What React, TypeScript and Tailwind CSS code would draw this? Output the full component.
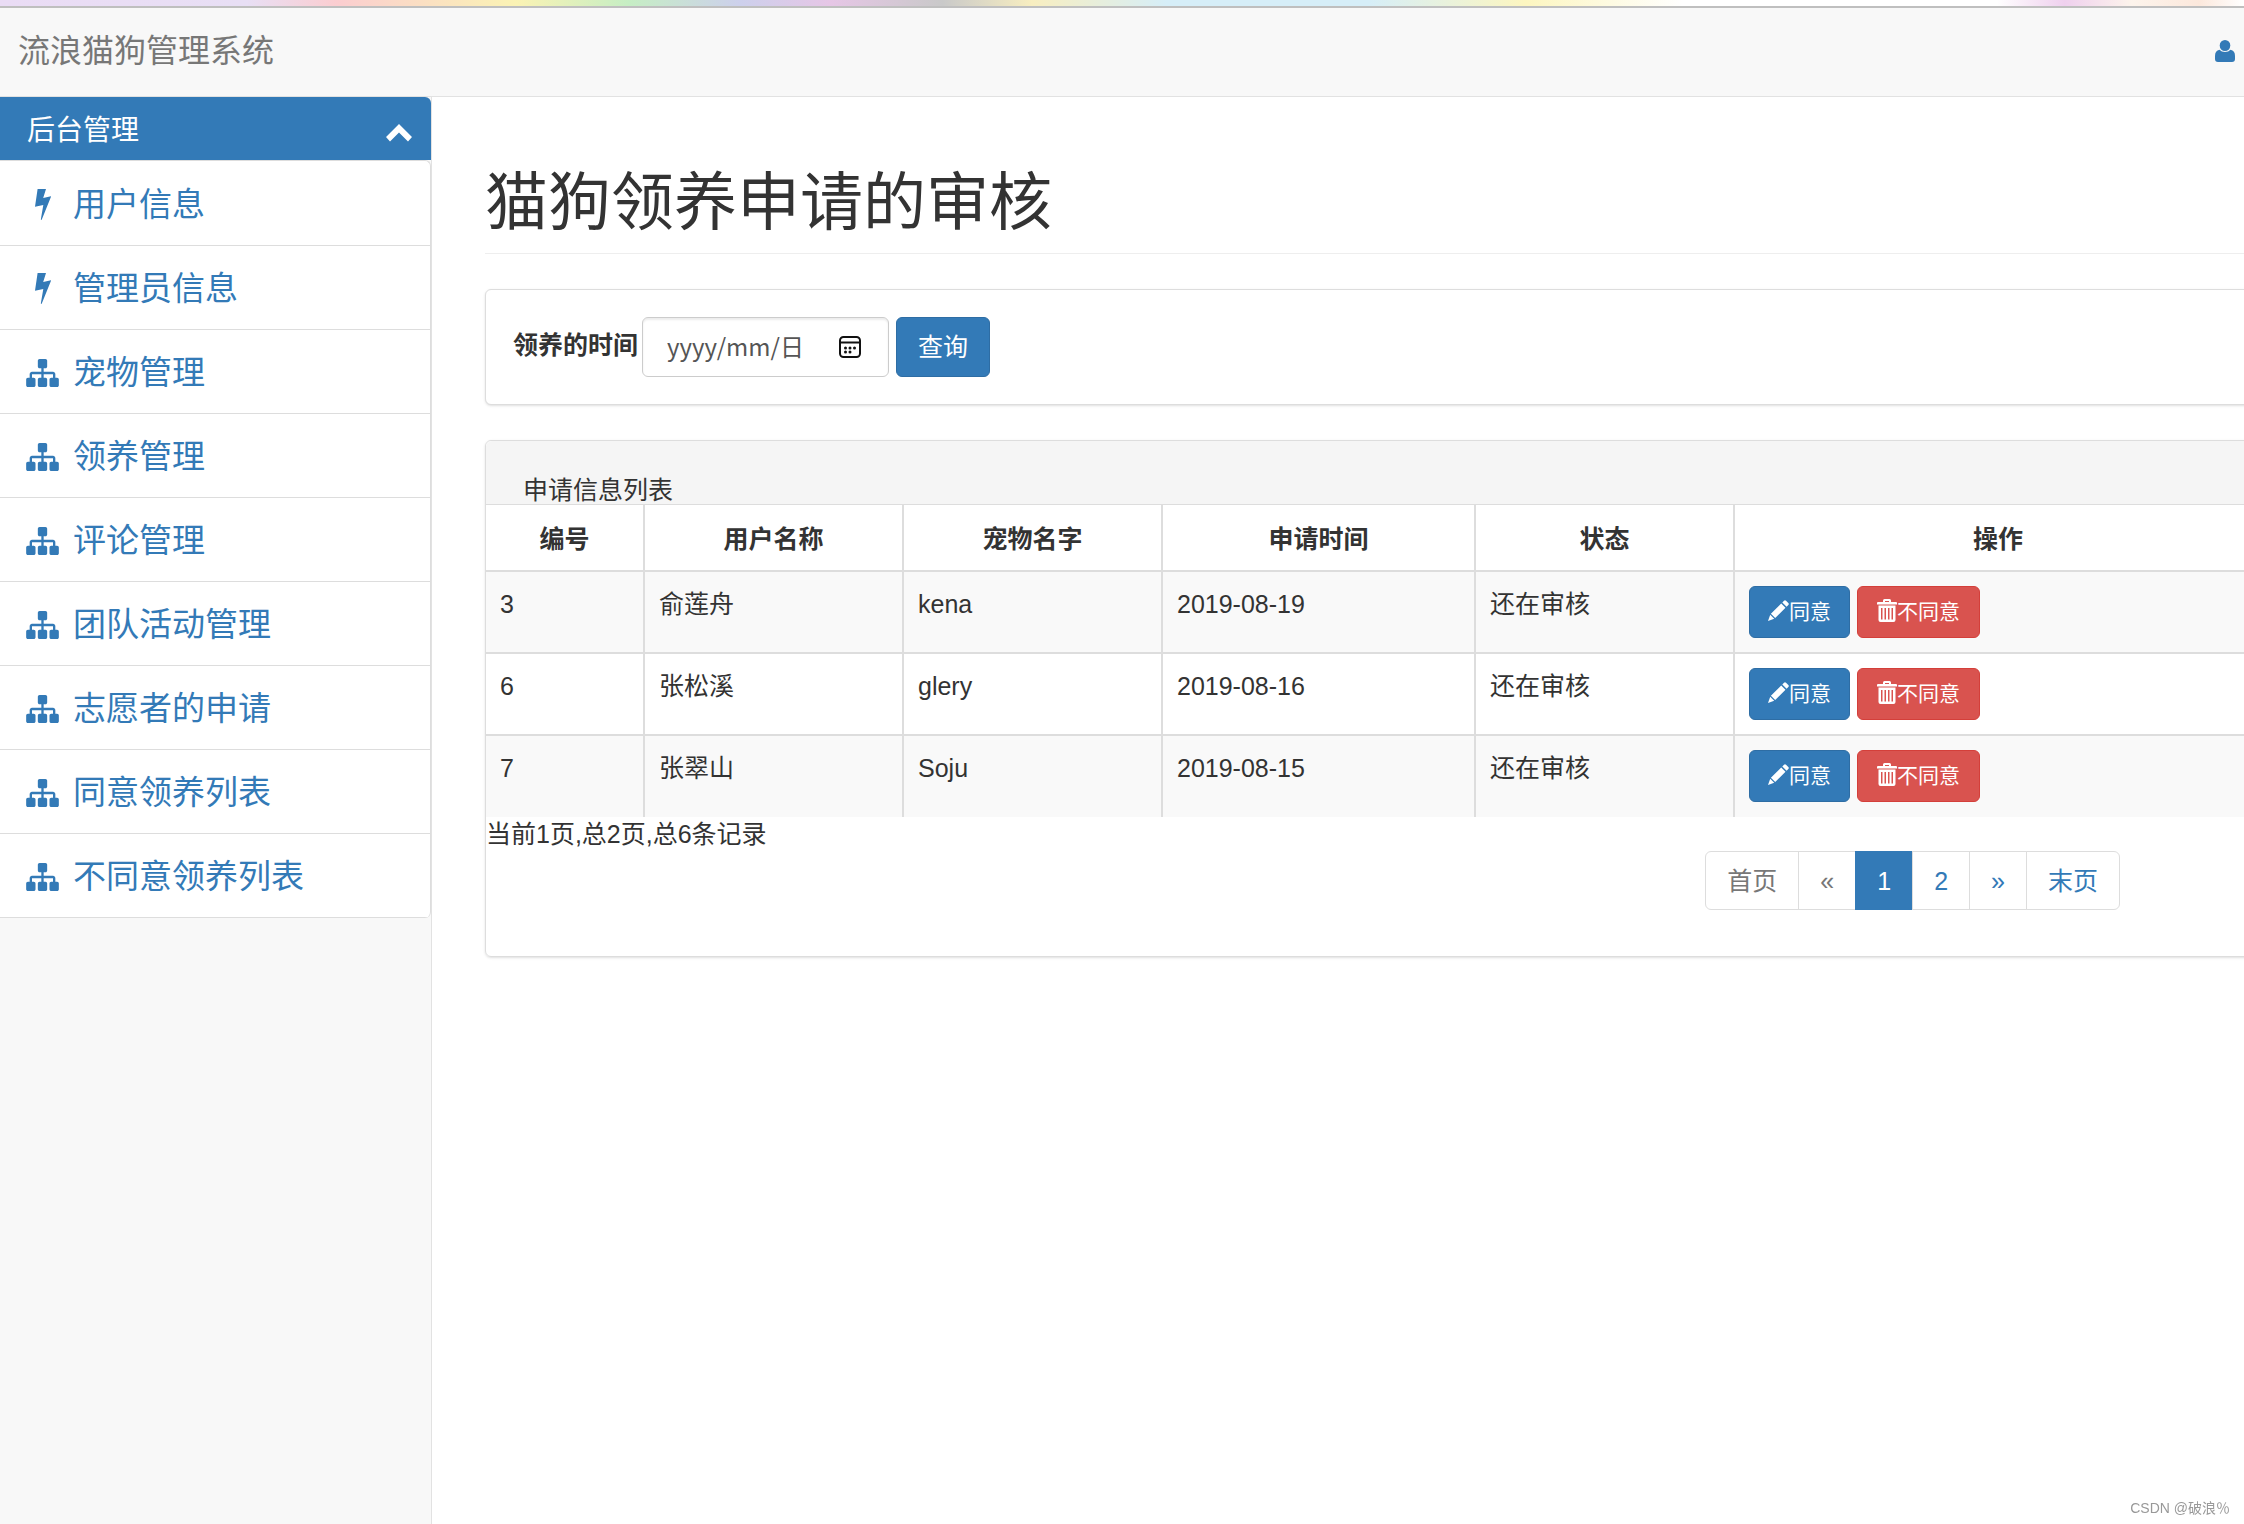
import React from "react";

const menuItems = [
  { label: "用户信息", icon: "bolt" },
  { label: "管理员信息", icon: "bolt" },
  { label: "宠物管理", icon: "sitemap" },
  { label: "领养管理", icon: "sitemap" },
  { label: "评论管理", icon: "sitemap" },
  { label: "团队活动管理", icon: "sitemap" },
  { label: "志愿者的申请", icon: "sitemap" },
  { label: "同意领养列表", icon: "sitemap" },
  { label: "不同意领养列表", icon: "sitemap" },
];

const columns = [
  { title: "编号", width: "w-[158px]" },
  { title: "用户名称", width: "w-[259px]" },
  { title: "宠物名字", width: "w-[259px]" },
  { title: "申请时间", width: "w-[313px]" },
  { title: "状态", width: "w-[259px]" },
  { title: "操作", width: "" },
];

const applications = [
  { id: 3, user: "俞莲舟", pet: "kena", date: "2019-08-19", status: "还在审核" },
  { id: 6, user: "张松溪", pet: "glery", date: "2019-08-16", status: "还在审核" },
  { id: 7, user: "张翠山", pet: "Soju", date: "2019-08-15", status: "还在审核" },
];

const pages = [
  { text: "首页", state: "disabled" },
  { text: "«", state: "disabled" },
  { text: "1", state: "active" },
  { text: "2", state: "" },
  { text: "»", state: "" },
  { text: "末页", state: "" },
];

const BoltIcon = () => (
  <svg viewBox="0 0 16 31" className="h-[31px] w-4" fill="currentColor" aria-hidden="true">
    <path d="M2.600 0H11L8.200 9l8-1.800L6.600 31 5.800 30.500 8.300 16 0 17.700z" />
  </svg>
);

const SitemapIcon = () => (
  <svg viewBox="0 128 1792 1536" className="h-7 w-[33px]" fill="currentColor" aria-hidden="true">
    <path d="M1792 1248v320q0 40-28 68t-68 28h-320q-40 0-68-28t-28-68v-320q0-40 28-68t68-28h96v-192h-512v192h96q40 0 68 28t28 68v320q0 40-28 68t-68 28h-320q-40 0-68-28t-28-68v-320q0-40 28-68t68-28h96v-192h-512v192h96q40 0 68 28t28 68v320q0 40-28 68t-68 28h-320q-40 0-68-28t-28-68v-320q0-40 28-68t68-28h96v-192q0-52 38-90t90-38h512v-192h-96q-40 0-68-28t-28-68v-320q0-40 28-68t68-28h320q40 0 68 28t28 68v320q0 40-28 68t-68 28h-96v192h512q52 0 90 38t38 90v192h96q40 0 68 28t28 68z" />
  </svg>
);

const UserIcon = () => (
  <svg viewBox="0 0 20 22" className="h-[22px] w-5" fill="currentColor" aria-hidden="true">
    <ellipse cx="10" cy="5.500" rx="5.300" ry="5.500" />
    <path d="M4.500 9.800Q0 10.800 0 16v3q0 3 3 3h14q3 0 3-3v-3q0-5.200-4.500-6.200Q13.500 12 10 12T4.500 9.800z" />
  </svg>
);

const ChevronUpIcon = () => (
  <svg viewBox="0 0 26 18" className="h-[18px] w-[26px]" fill="currentColor" aria-hidden="true">
    <path d="M13 0l13 13-4 4.500-9-9-9 9L0 13z" />
  </svg>
);

const CalendarIcon = () => (
  <svg viewBox="0 0 22 22" className="h-[22px] w-[22px]" fill="none" stroke="#111" strokeWidth="2" aria-hidden="true">
    <rect x="1" y="1" width="20" height="20" rx="3.500" />
    <path d="M1 6.500h20" />
    <g fill="#111" stroke="none">
      <circle cx="6.500" cy="12" r="1.500" />
      <circle cx="11" cy="12" r="1.500" />
      <circle cx="15.500" cy="12" r="1.500" />
      <circle cx="6.500" cy="16" r="1.500" />
      <circle cx="11" cy="16" r="1.500" />
    </g>
  </svg>
);

const PencilIcon = () => (
  <svg viewBox="0 0 21 21" className="mb-1 h-[21px] w-[21px]" fill="currentColor" aria-hidden="true">
    <path d="M16 .7q1-1 2 0l2.300 2.300q1 1 0 2L18.600 6.700 14.300 2.400zM13.200 3.500l4.300 4.300L7.200 18.100l-4.300-4.300zM2.200 14.800l4 4L0 21z" />
  </svg>
);

const TrashIcon = () => (
  <svg viewBox="0 0 20 23" className="mb-1 h-[23px] w-5" fill="currentColor" fillRule="evenodd" aria-hidden="true">
    <path d="M6 3V1.500Q6 0 7.500 0h5Q14 0 14 1.500V3h5q1 0 1 1v1.500H0V4q0-1 1-1zM8 3h4V2H8zM1.500 6.500h17V21q0 2-2 2h-13q-2 0-2-2zM4 9v11.500h1.500V9zm3.500 0v11.500H9V9zm3.500 0v11.500h1.500V9zm3.500 0v11.500H16V9z" />
  </svg>
);

const Header = () => (
  <header>
    <div className="h-1.5 bg-[linear-gradient(90deg,#eadcf5_0%,#e8dff5_11%,#fbcdd0_15%,#fbf3b4_23%,#c6eec4_28%,#cdd0ec_33%,#e6c6e6_37%,#c9c9c9_42%,#f8eec0_46%,#d6eef8_52%,#d6eef8_61%,#fdf6c0_68%,#ffffff_75%,#ffffff_89%,#efd0ee_92%,#fdf4ec_95%,#fce8dc_98%,#ffffff_100%)]" />
    <div className="h-0.5 bg-[#bfbfbf]" />
    <nav className="flex h-[89px] items-center justify-between border-b border-[#e2e2e2] bg-[#f8f8f8] pb-0.5 pl-[18px] pr-[9px]">
      <a href="#" className="text-[32px] leading-10 text-[#777]">
        流浪猫狗管理系统
      </a>
      <a href="#" aria-label="用户" className="text-[#337ab7]">
        <UserIcon />
      </a>
    </nav>
  </header>
);

const Sidebar = () => (
  <aside className="w-[432px] shrink-0 border-r border-[#e2e2e2] bg-[#f8f8f8]">
    <button className="flex h-[63px] w-full items-center justify-between rounded-tr-md bg-[#337ab7] pl-[27px] pr-[19px] pt-1 text-[28px] leading-10 text-white">
      后台管理
      <span className="pt-1">
        <ChevronUpIcon />
      </span>
    </button>
    <ul className="overflow-hidden rounded-r-md border-r border-t border-[#ddd] bg-white pt-px">
      {menuItems.map((item) => (
        <li key={item.label} className="border-b border-[#ddd]">
          <a
            href="#"
            className="flex h-[83px] items-center gap-3.5 pl-[26px] pt-0.5 text-[33px] leading-10 text-[#337ab7]"
          >
            <span className="flex w-[33px] justify-center">
              {item.icon === "bolt" ? <BoltIcon /> : <SitemapIcon />}
            </span>
            {item.label}
          </a>
        </li>
      ))}
    </ul>
  </aside>
);

const SearchPanel = () => (
  <form
    onSubmit={(e) => e.preventDefault()}
    className="flex items-center rounded-md border border-[#ddd] bg-white px-[27px] py-[27px] shadow-sm"
  >
    <label htmlFor="adoptTime" className="pb-1 font-bold">
      领养的时间
    </label>
    <div className="relative ml-1">
      <input
        id="adoptTime"
        type="text"
        placeholder="yyyy/mm/日"
        className="h-[60px] w-[247px] rounded-md border border-[#ccc] pb-1 pl-6 font-['Noto_Sans_CJK_SC',sans-serif] text-[24px] text-[#555] shadow-[inset_0_2px_2px_rgba(0,0,0,0.075)] placeholder:text-[#555]"
      />
      <span className="pointer-events-none absolute right-7 top-[19px]">
        <CalendarIcon />
      </span>
    </div>
    <button className="ml-[7px] h-[60px] w-[94px] rounded-md border border-[#2e6da4] bg-[#337ab7] text-white">
      查询
    </button>
  </form>
);

const ApplicationTable = () => (
  <table className="w-full table-fixed border-collapse">
    <thead>
      <tr className="h-[66px]">
        {columns.map((col) => (
          <th
            key={col.title}
            className={`border-b-2 border-l-2 border-[#ddd] pt-0.5 text-center font-bold first:border-l-0 ${col.width}`}
          >
            {col.title}
          </th>
        ))}
      </tr>
    </thead>
    <tbody>
      {applications.map((row) => (
        <tr
          key={row.id}
          className="h-[82px] border-b-2 border-[#ddd] align-top odd:bg-[#f9f9f9] last:border-b-0 [&>td]:border-l-2 [&>td]:border-[#ddd] [&>td]:px-3.5 [&>td]:pt-3.5 [&>td:first-child]:border-l-0"
        >
          <td>{row.id}</td>
          <td>{row.user}</td>
          <td>{row.pet}</td>
          <td>{row.date}</td>
          <td>{row.status}</td>
          <td>
            <div className="flex gap-[7px] text-[21px] leading-8 text-white">
              <button className="flex h-[52px] items-center rounded-md border border-[#2e6da4] bg-[#337ab7] px-[18px]">
                <PencilIcon />
                同意
              </button>
              <button className="flex h-[52px] items-center rounded-md border border-[#d43f3a] bg-[#d9534f] px-[19px]">
                <TrashIcon />
                不同意
              </button>
            </div>
          </td>
        </tr>
      ))}
    </tbody>
  </table>
);

const Pagination = () => (
  <ul className="flex">
    {pages.map((page) => (
      <li key={page.text} className="group -ml-px first:ml-0">
        <a
          href="#"
          className={`flex h-[59px] items-center border px-[21px] group-first:rounded-l-md group-last:rounded-r-md ${
            page.state === "active"
              ? "border-[#337ab7] bg-[#337ab7] text-white"
              : page.state === "disabled"
                ? "border-[#ddd] bg-white text-[#777]"
                : "border-[#ddd] bg-white text-[#337ab7]"
          }`}
        >
          {page.text}
        </a>
      </li>
    ))}
  </ul>
);

const App = () => {
  return (
    <div className="flex min-h-screen flex-col overflow-hidden bg-white font-['Liberation_Sans','Noto_Sans_CJK_SC',sans-serif] text-[25px] leading-9 text-[#333]">
      <Header />
      <div className="flex grow">
        <Sidebar />
        <main className="-mr-[18px] min-w-0 grow pl-[53px]">
          <h1 className="border-b border-[#eee] pb-[15px] pt-[69px] text-[63px] leading-[72px]">
            猫狗领养申请的审核
          </h1>
          <div className="mt-[35px]">
            <SearchPanel />
          </div>
          <section className="mt-[35px] rounded-md border border-[#ddd] shadow-sm">
            <div className="rounded-t-md border-b border-[#ddd] bg-[#f5f5f5] pl-[37px] pt-[35px] leading-7">
              申请信息列表
            </div>
            <ApplicationTable />
            <p className="leading-[34px]">当前1页,总2页,总6条记录</p>
            <div className="flex justify-end pb-[46px] pr-[141px]">
              <Pagination />
            </div>
          </section>
        </main>
      </div>
      <div className="fixed bottom-1.5 right-3.5 text-[14px] leading-5 text-[#999]">
        CSDN @破浪％
      </div>
    </div>
  );
};

export default App;
